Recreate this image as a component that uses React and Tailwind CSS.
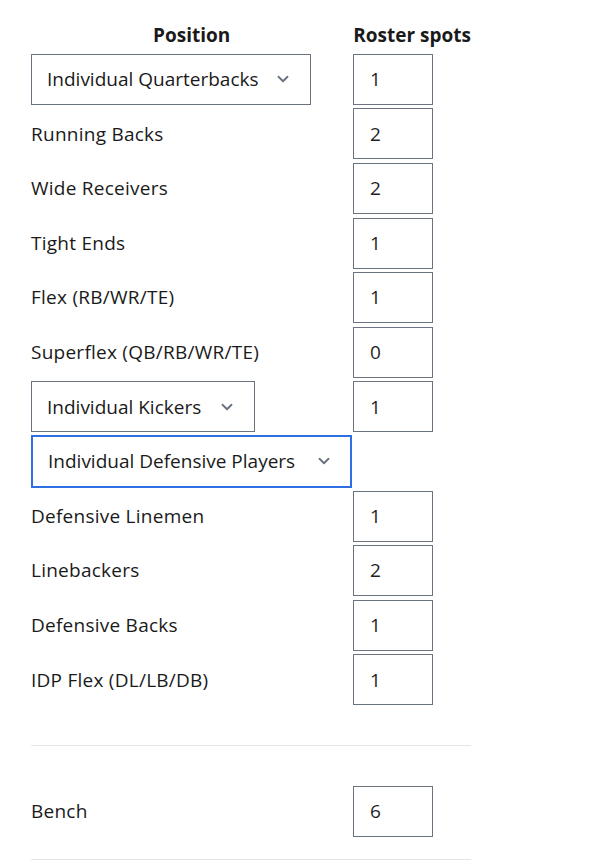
import React from "react";
import { ChevronDown } from "lucide-react";

const rows = [
  { type: "select", label: "Individual Quarterbacks", value: "1", w: "w-[280px]" },
  { label: "Running Backs", value: "2" },
  { label: "Wide Receivers", value: "2" },
  { label: "Tight Ends", value: "1" },
  { label: "Flex (RB/WR/TE)", value: "1" },
  { label: "Superflex (QB/RB/WR/TE)", value: "0" },
  { type: "select", label: "Individual Kickers", value: "1", w: "w-[224px]" },
  { type: "select", label: "Individual Defensive Players", focus: true, w: "w-[321px]" },
  { label: "Defensive Linemen", value: "1" },
  { label: "Linebackers", value: "2" },
  { label: "Defensive Backs", value: "1" },
  { label: "IDP Flex (DL/LB/DB)", value: "1" },
];

const SpotInput = ({ value }) => (
  <div className="w-[80px] h-[51px] border border-[#6b7280] flex items-center pl-[16px] text-[#1f1f1f]">
    {value}
  </div>
);

const Select = ({ label, w, focus }) => (
  <div
    className={`${w} flex items-center justify-between pl-[15px] ${
      focus ? "h-[53px] pr-[17px] border-2 border-[#2f6fe4]" : "h-[51px] pr-[18px] border border-[#6b7280]"
    }`}
  >
    <span className="whitespace-nowrap">{label}</span>
    <ChevronDown size={18} strokeWidth={2.5} className="text-[#6b7280] shrink-0" />
  </div>
);

export default function App() {
  return (
    <div
      className="bg-white w-[601px] min-h-[865px] pl-[31px] pt-[21px] text-[19px] text-[#1a1a1a]"
      style={{ fontFamily: "'Open Sans', sans-serif" }}
    >
      <div className="w-[440px]">
        <div className="flex font-bold h-[28px] items-center whitespace-nowrap">
          <div className="w-[322px] text-center">Position</div>
          <div className="pl-[1px]">Roster spots</div>
        </div>
        <div className="mt-[3px] flex flex-col">
          {rows.map((r) => (
            <div key={r.label} className="flex items-center h-[54.6px]">
              <div className="w-[322px]">
                {r.type === "select" ? (
                  <Select label={r.label} w={r.w} focus={r.focus} />
                ) : (
                  <span className="tracking-[0.25px]">{r.label}</span>
                )}
              </div>
              {r.value && <SpotInput value={r.value} />}
            </div>
          ))}
        </div>
        <div className="mt-[38px] border-t border-[#e5e5e5]" />
        <div className="mt-[40px] flex items-center h-[51px]">
          <div className="w-[322px] tracking-[0.25px]">Bench</div>
          <SpotInput value="6" />
        </div>
        <div className="mt-[22px] border-t border-[#e5e5e5]" />
      </div>
    </div>
  );
}
